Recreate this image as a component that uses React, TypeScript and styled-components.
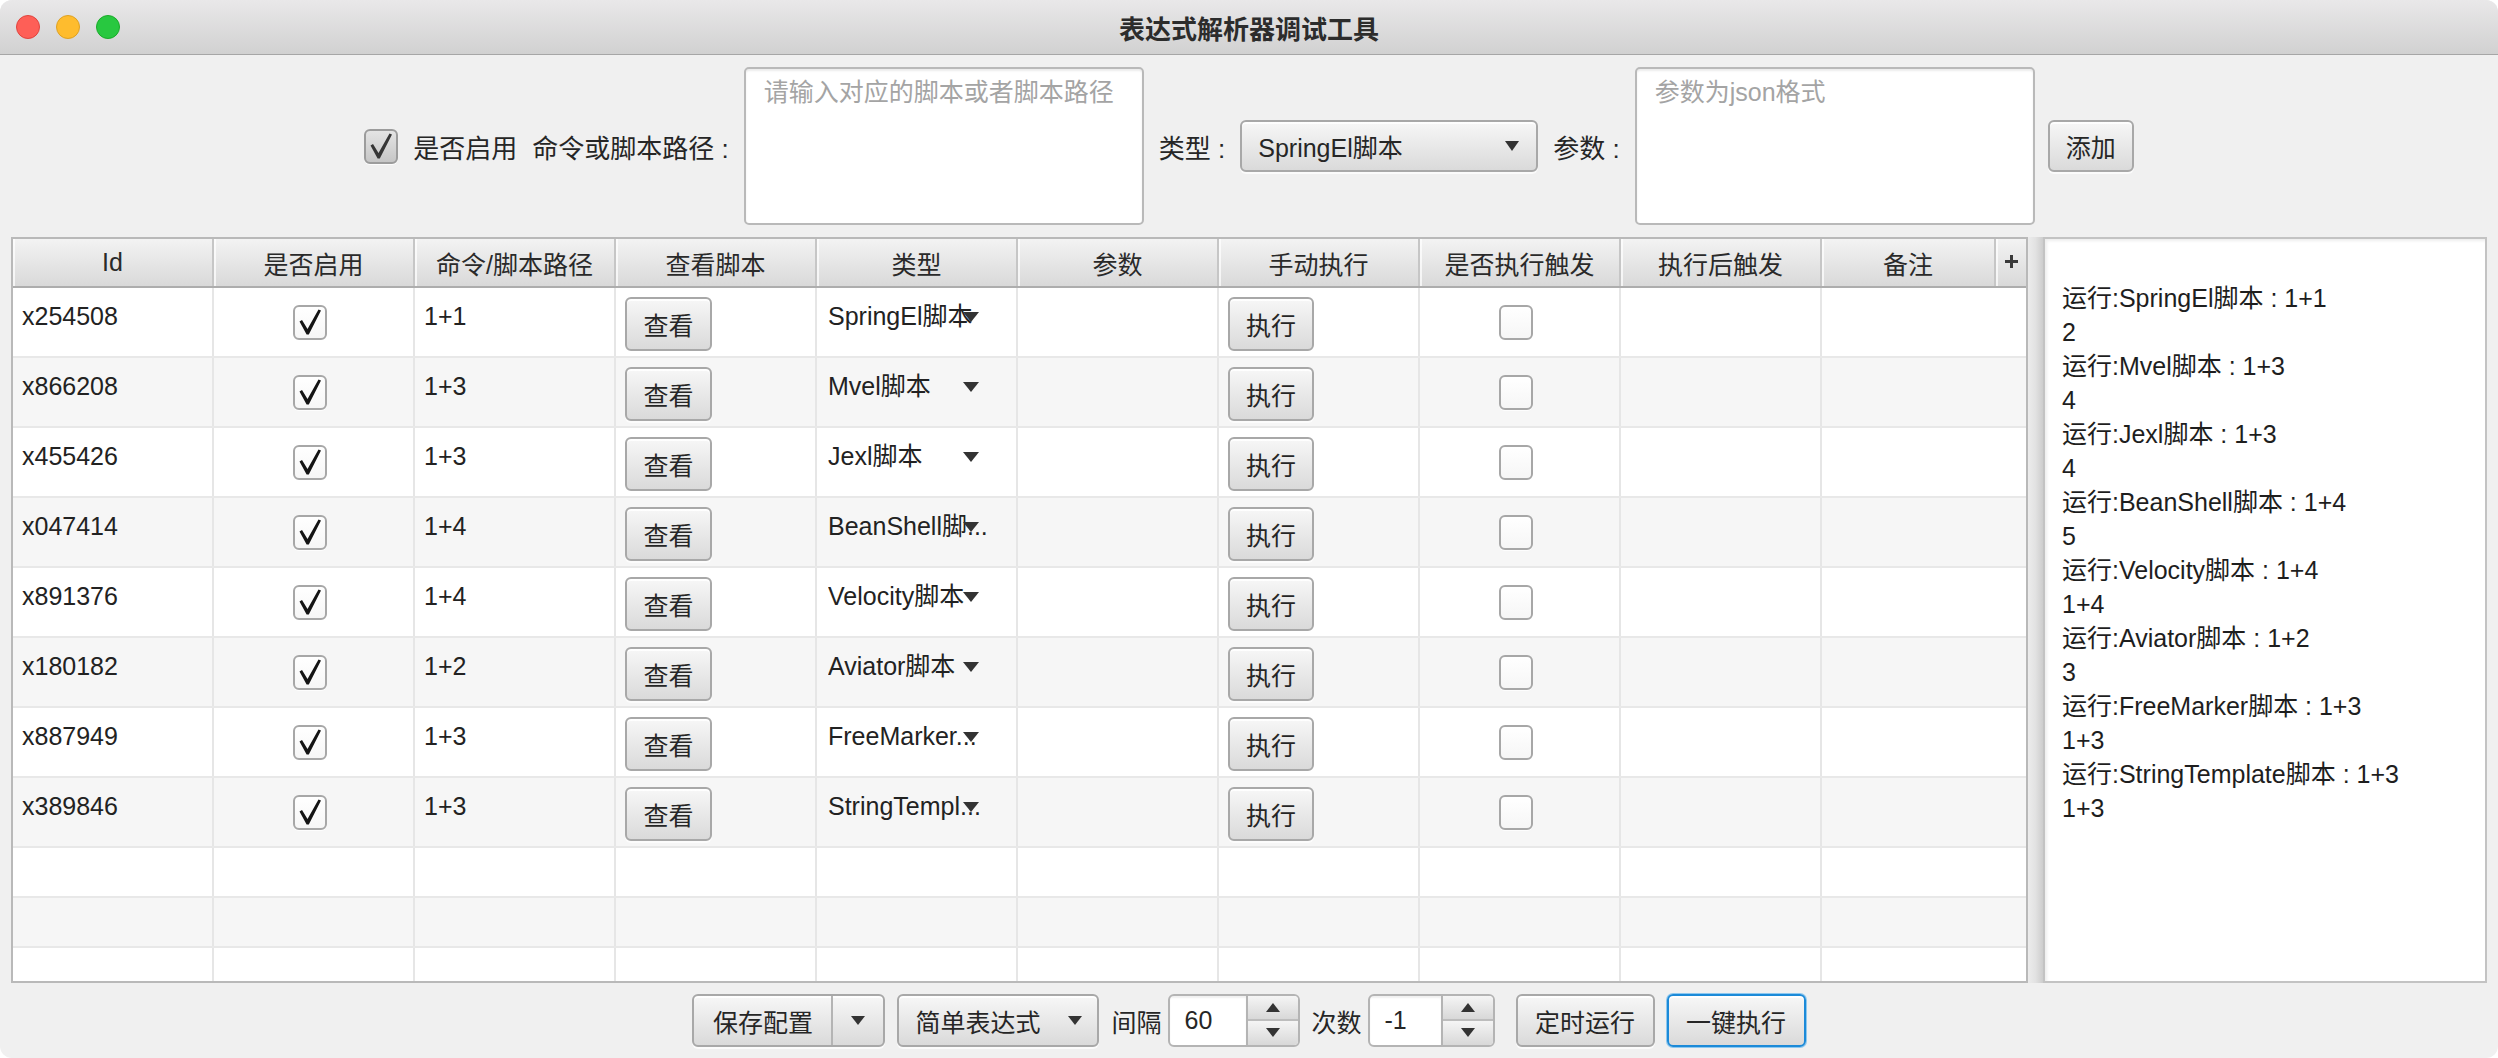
import React from 'react';
import styled, { createGlobalStyle, css } from 'styled-components';

const FONT = `"Liberation Sans", "Noto Sans CJK SC", sans-serif`;

// label is what the narrow choice cell can show of the type name
const rows = [
  { id: 'x254508', cmd: '1+1', type: 'SpringEl脚本', label: 'SpringEl脚本' },
  { id: 'x866208', cmd: '1+3', type: 'Mvel脚本', label: 'Mvel脚本' },
  { id: 'x455426', cmd: '1+3', type: 'Jexl脚本', label: 'Jexl脚本' },
  { id: 'x047414', cmd: '1+4', type: 'BeanShell脚本', label: 'BeanShell脚...' },
  { id: 'x891376', cmd: '1+4', type: 'Velocity脚本', label: 'Velocity脚本' },
  { id: 'x180182', cmd: '1+2', type: 'Aviator脚本', label: 'Aviator脚本' },
  { id: 'x887949', cmd: '1+3', type: 'FreeMarker脚本', label: 'FreeMarker...' },
  { id: 'x389846', cmd: '1+3', type: 'StringTemplate脚本', label: 'StringTempl...' },
];

const headers = ['Id', '是否启用', '命令/脚本路径', '查看脚本', '类型', '参数', '手动执行', '是否执行触发', '执行后触发', '备注'];

const logLines = [
  '运行:SpringEl脚本 : 1+1', '2',
  '运行:Mvel脚本 : 1+3', '4',
  '运行:Jexl脚本 : 1+3', '4',
  '运行:BeanShell脚本 : 1+4', '5',
  '运行:Velocity脚本 : 1+4', '1+4',
  '运行:Aviator脚本 : 1+2', '3',
  '运行:FreeMarker脚本 : 1+3', '1+3',
  '运行:StringTemplate脚本 : 1+3', '1+3',
];

const GlobalStyle = createGlobalStyle`
  html, body {
    margin: 0;
    padding: 0;
    background: #ffffff;
  }
  * {
    box-sizing: border-box;
  }
`;

const surface = css`
  background: linear-gradient(#f7f7f7, #dadada);
  border: 2px solid #a8a8a8;
  border-radius: 6px;
  box-shadow: inset 0 2px 0 rgba(255, 255, 255, 0.9), 0 2px 0 rgba(255, 255, 255, 0.7);
  color: #262626;
  font-family: ${FONT};
  font-size: 25px;
`;

const Window = styled.div`
  width: 2498px;
  height: 1058px;
  display: flex;
  flex-direction: column;
  background: #f0f0f0;
  border-radius: 12px;
  overflow: hidden;
  font-family: ${FONT};
  color: #262626;
`;

const TitleBar = styled.div`
  flex: none;
  height: 55px;
  display: grid;
  grid-template-columns: 1fr auto 1fr;
  align-items: center;
  background: linear-gradient(#e9e8e9, #d1d1d1);
  border-bottom: 1px solid #a6a6a6;
`;

const Lights = styled.div`
  display: flex;
  gap: 16px;
  padding-left: 16px;
`;

const Light = styled.span<{ $fill: string; $edge: string }>`
  width: 24px;
  height: 24px;
  border-radius: 50%;
  background: ${(p) => p.$fill};
  border: 1px solid ${(p) => p.$edge};
`;

const Title = styled.div`
  font-size: 26px;
  font-weight: bold;
  color: #2c2c2c;
`;

const FormRow = styled.div`
  flex: none;
  height: 182px;
  display: flex;
  align-items: center;
  justify-content: center;
  gap: 13px;
`;

const CheckLabel = styled.label`
  display: flex;
  align-items: center;
  gap: 15px;
  font-size: 26px;
`;

const Box = styled.span<{ $tone: 'gray' | 'white' }>`
  flex: none;
  width: 34px;
  height: 35px;
  display: flex;
  align-items: center;
  justify-content: center;
  border: 2px solid ${(p) => (p.$tone === 'gray' ? '#9c9c9c' : '#a7a7a7')};
  border-radius: 6px;
  background: ${(p) => (p.$tone === 'gray' ? 'linear-gradient(#e4e4e4, #c6c6c6)' : 'linear-gradient(#ffffff, #f6f6f6)')};
  box-shadow: 0 1px 0 rgba(255, 255, 255, 0.8);
`;

const FieldLabel = styled.span`
  font-size: 26px;
  white-space: nowrap;
  padding: 0 2px;
`;

const InputArea = styled.textarea`
  width: 400px;
  height: 158px;
  resize: none;
  padding: 6px 18px;
  border: 2px solid #b9b9b9;
  border-radius: 5px;
  background: #ffffff;
  box-shadow: inset 0 2px 2px rgba(0, 0, 0, 0.08);
  font-family: ${FONT};
  font-size: 25px;
  line-height: 34px;
  outline: none;

  &::placeholder {
    color: #a4a4a4;
  }
`;

const Combo = styled.div`
  ${surface}
  width: 298px;
  height: 52px;
  display: flex;
  align-items: center;
  justify-content: space-between;
  padding: 0 17px 0 16px;
`;

const Caret = styled.span<{ $up?: boolean; $w?: number }>`
  flex: none;
  width: 0;
  height: 0;
  border-left: ${(p) => (p.$w ?? 15) / 2}px solid transparent;
  border-right: ${(p) => (p.$w ?? 15) / 2}px solid transparent;
  ${(p) => (p.$up ? 'border-bottom' : 'border-top')}: ${(p) => Math.round((p.$w ?? 15) * 0.66)}px solid #333;
`;

const PushButton = styled.button<{ $w: number; $h: number; $focus?: boolean }>`
  ${surface}
  width: ${(p) => p.$w}px;
  height: ${(p) => p.$h}px;
  padding: 0;
  display: flex;
  align-items: center;
  justify-content: center;
  ${(p) =>
    p.$focus &&
    css`
      border-color: #1c8ad8;
      box-shadow: 0 0 0 1px #8cc8f0, inset 0 2px 0 rgba(255, 255, 255, 0.9);
    `}
`;

const Workspace = styled.div`
  flex: 1;
  min-height: 0;
  display: flex;
  padding: 0 11px;
`;

const Table = styled.div`
  width: 2017px;
  display: flex;
  flex-direction: column;
  border: 2px solid #b9b9b9;
  background: #ffffff;
  overflow: hidden;
`;

const HeaderRow = styled.div`
  flex: none;
  height: 49px;
  display: grid;
  grid-template-columns: repeat(9, 201px) 1fr 30px;
  background: linear-gradient(#f3f3f3, #d9d9d9);
  border-bottom: 2px solid #adadad;
`;

const HeaderCell = styled.div`
  display: flex;
  align-items: center;
  justify-content: center;
  font-size: 25px;
  color: #2a2a2a;
  border-right: 2px solid #c6c6c6;
  box-shadow: inset 2px 0 0 rgba(255, 255, 255, 0.7);
  white-space: nowrap;
`;

const CornerCell = styled.div`
  display: flex;
  justify-content: center;
  padding-top: 16px;
  box-shadow: inset 2px 0 0 rgba(255, 255, 255, 0.7);
`;

const BodyRow = styled.div<{ $alt: boolean; $empty?: boolean }>`
  flex: none;
  height: ${(p) => (p.$empty ? 50 : 70)}px;
  display: grid;
  grid-template-columns: repeat(9, 201px) 1fr;
  background: ${(p) => (p.$alt ? '#f6f6f6' : '#ffffff')};
  border-bottom: 2px solid #e8e8e8;
`;

const Cell = styled.div<{ $kind?: 'text' | 'check' | 'button' }>`
  display: flex;
  min-width: 0;
  border-right: 2px solid #e6e6e6;
  font-size: 25px;
  line-height: 30px;
  color: #222;
  ${(p) =>
    p.$kind === 'check'
      ? css`
          align-items: center;
          justify-content: center;
          padding-right: 8px;
        `
      : p.$kind === 'button'
      ? css`
          align-items: flex-start;
          padding: 9px 0 0 9px;
        `
      : css`
          align-items: flex-start;
          padding: 13px 9px 0;
        `}

  &:last-child {
    border-right: none;
  }
`;

const Choice = styled.div`
  position: relative;
  width: 151px;
  margin-left: 2px;
`;

const ChoiceText = styled.div`
  width: max-content;
  max-width: 170px;
  overflow: hidden;
  white-space: nowrap;
`;

const ChoiceCaret = styled.span`
  position: absolute;
  right: 0;
  top: 11px;
  width: 0;
  height: 0;
  border-left: 8px solid transparent;
  border-right: 8px solid transparent;
  border-top: 10px solid #333;
`;

const Splitter = styled.div`
  flex: none;
  width: 15px;
  background: linear-gradient(to right, #ececec, #e2e2e2 50%, #cdcdcd);
`;

const LogPanel = styled.div`
  flex: 1;
  border: 2px solid #c3c3c3;
  background: #ffffff;
  box-shadow: inset 2px 2px 3px rgba(0, 0, 0, 0.07);
  padding: 42px 17px 0;
  font-size: 25px;
  line-height: 34px;
  color: #1e1e1e;
  overflow: hidden;
`;

const LogLine = styled.div`
  white-space: nowrap;
`;

const BottomBar = styled.div`
  flex: none;
  height: 75px;
  display: flex;
  align-items: center;
  justify-content: center;
  gap: 12px;
`;

const SplitButton = styled.div`
  ${surface}
  height: 53px;
  display: flex;
  overflow: hidden;
`;

const SplitMain = styled.div`
  width: 139px;
  display: flex;
  align-items: center;
  justify-content: center;
  border-right: 2px solid #b4b4b4;
`;

const SplitArrow = styled.div`
  width: 50px;
  display: flex;
  align-items: center;
  justify-content: center;
`;

const MenuButton = styled.div`
  ${surface}
  width: 202px;
  height: 53px;
  display: flex;
  align-items: center;
  justify-content: space-between;
  padding: 0 15px 0 16px;
`;

const SpinGroup = styled.div`
  display: flex;
  align-items: center;
  gap: 6px;
  font-size: 25px;
`;

const Spinner = styled.div<{ $field: number }>`
  display: grid;
  grid-template-columns: ${(p) => p.$field}px 52px;
  height: 53px;
  border: 2px solid #b4b4b4;
  border-radius: 6px;
  overflow: hidden;
  background: #ffffff;
`;

const SpinField = styled.div`
  display: flex;
  align-items: center;
  padding-left: 15px;
  font-size: 25px;
  box-shadow: inset 0 2px 2px rgba(0, 0, 0, 0.06);
`;

const SpinArrows = styled.div`
  display: grid;
  grid-template-rows: 1fr 1fr;
  border-left: 2px solid #b4b4b4;
`;

const SpinHalf = styled.div<{ $top?: boolean }>`
  display: flex;
  align-items: center;
  justify-content: center;
  background: linear-gradient(#f5f5f5, #d8d8d8);
  border-bottom: ${(p) => (p.$top ? '2px solid #bdbdbd' : 'none')};
`;

const CheckMark = ({ color }: { color: string }) => (
  <svg width="26" height="28" viewBox="0 0 26 28">
    <path d="M2.5 13.5 L5 12 L10.5 21 L21.5 1.5 L24 2.5 L11.8 26.5 L9.6 26.5 Z" fill={color} />
  </svg>
);

const PlusIcon = () => (
  <svg width="13" height="13" viewBox="0 0 13 13">
    <path d="M5 0 H8 V5 H13 V8 H8 V13 H5 V8 H0 V5 H5 Z" fill="#3a3a3a" />
  </svg>
);

const App = () => {
  return (
    <>
      <GlobalStyle />
      <Window>
        <TitleBar>
          <Lights>
            <Light $fill="#fe5f57" $edge="#e0443e" />
            <Light $fill="#febc2e" $edge="#dea123" />
            <Light $fill="#28c840" $edge="#1aab29" />
          </Lights>
          <Title>表达式解析器调试工具</Title>
          <div />
        </TitleBar>

        <FormRow>
          <CheckLabel>
            <Box $tone="gray">
              <CheckMark color="#363636" />
            </Box>
            是否启用
          </CheckLabel>
          <FieldLabel>命令或脚本路径 :</FieldLabel>
          <InputArea placeholder="请输入对应的脚本或者脚本路径" />
          <FieldLabel>类型 :</FieldLabel>
          <Combo>
            SpringEl脚本
            <Caret />
          </Combo>
          <FieldLabel>参数 :</FieldLabel>
          <InputArea placeholder="参数为json格式" />
          <PushButton $w={86} $h={52}>添加</PushButton>
        </FormRow>

        <Workspace>
          <Table>
            <HeaderRow>
              {headers.map((h) => (
                <HeaderCell key={h}>{h}</HeaderCell>
              ))}
              <CornerCell>
                <PlusIcon />
              </CornerCell>
            </HeaderRow>
            {rows.map((r, i) => (
              <BodyRow key={r.id} $alt={i % 2 === 1}>
                <Cell>{r.id}</Cell>
                <Cell $kind="check">
                  <Box $tone="white">
                    <CheckMark color="#141414" />
                  </Box>
                </Cell>
                <Cell>{r.cmd}</Cell>
                <Cell $kind="button">
                  <PushButton $w={87} $h={54}>查看</PushButton>
                </Cell>
                <Cell>
                  <Choice title={r.type}>
                    <ChoiceText>{r.label}</ChoiceText>
                    <ChoiceCaret />
                  </Choice>
                </Cell>
                <Cell />
                <Cell $kind="button">
                  <PushButton $w={86} $h={54}>执行</PushButton>
                </Cell>
                <Cell $kind="check">
                  <Box $tone="white" />
                </Cell>
                <Cell />
                <Cell />
              </BodyRow>
            ))}
            {[0, 1, 2].map((k) => (
              <BodyRow key={k} $alt={k % 2 === 1} $empty>
                {headers.map((h) => (
                  <Cell key={h} />
                ))}
              </BodyRow>
            ))}
          </Table>
          <Splitter />
          <LogPanel>
            {logLines.map((line, i) => (
              <LogLine key={i}>{line}</LogLine>
            ))}
          </LogPanel>
        </Workspace>

        <BottomBar>
          <SplitButton>
            <SplitMain>保存配置</SplitMain>
            <SplitArrow>
              <Caret $w={14} />
            </SplitArrow>
          </SplitButton>
          <MenuButton>
            简单表达式
            <Caret $w={14} />
          </MenuButton>
          <SpinGroup>
            间隔
            <Spinner $field={76}>
              <SpinField>60</SpinField>
              <SpinArrows>
                <SpinHalf $top>
                  <Caret $up $w={14} />
                </SpinHalf>
                <SpinHalf>
                  <Caret $w={14} />
                </SpinHalf>
              </SpinArrows>
            </Spinner>
          </SpinGroup>
          <SpinGroup>
            次数
            <Spinner $field={71}>
              <SpinField>-1</SpinField>
              <SpinArrows>
                <SpinHalf $top>
                  <Caret $up $w={14} />
                </SpinHalf>
                <SpinHalf>
                  <Caret $w={14} />
                </SpinHalf>
              </SpinArrows>
            </Spinner>
          </SpinGroup>
          <PushButton $w={139} $h={53} style={{ marginLeft: 9 }}>定时运行</PushButton>
          <PushButton $w={139} $h={53} $focus>一键执行</PushButton>
        </BottomBar>
      </Window>
    </>
  );
};

export default App;
